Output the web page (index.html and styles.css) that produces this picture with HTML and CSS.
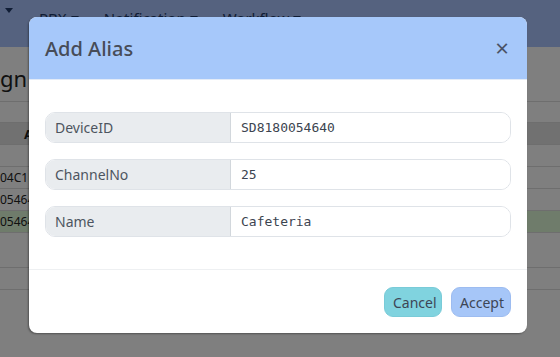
FILE: index.html
```html
<!DOCTYPE html>
<html>
<head>
<meta charset="utf-8">
<link rel="stylesheet" href="styles.css">
</head>
<body>
<div class="page">
  <nav class="navbar">
    <span class="nav-item"><span class="caret"></span></span>
    <span class="nav-item">PBX <span class="caret"></span></span>
    <span class="nav-item">Notification <span class="caret"></span></span>
    <span class="nav-item">Workflow <span class="caret"></span></span>
  </nav>
  <main class="content">
    <h4 class="page-title">gn</h4>
    <div class="table">
      <div class="row row-spacer"></div>
      <div class="row row-head"><span class="cell bold">A</span></div>
      <div class="row"></div>
      <div class="row"><span class="cell">04C1F8</span></div>
      <div class="row"><span class="cell">054640</span></div>
      <div class="row row-green"><span class="cell">054640</span></div>
      <div class="row row-tall"></div>
      <div class="row"></div>
      <div class="row row-tall2"></div>
    </div>
  </main>
  <div class="backdrop"></div>
  <div class="modal">
    <div class="modal-header">
      <h5 class="modal-title">Add Alias</h5>
      <span class="close">&times;</span>
    </div>
    <div class="modal-body">
      <div class="input-group">
        <span class="addon">DeviceID</span>
        <span class="field">SD8180054640</span>
      </div>
      <div class="input-group">
        <span class="addon">ChannelNo</span>
        <span class="field">25</span>
      </div>
      <div class="input-group">
        <span class="addon">Name</span>
        <span class="field">Cafeteria</span>
      </div>
    </div>
    <div class="modal-footer">
      <button class="btn btn-cancel">Cancel</button>
      <button class="btn btn-accept">Accept</button>
    </div>
  </div>
</div>
</body>
</html>
```
FILE: styles.css
```css
* { box-sizing: border-box; }
html, body { margin: 0; padding: 0; }
body {
  width: 560px;
  height: 357px;
  overflow: hidden;
  font-family: "Noto Sans", "Open Sans", sans-serif;
  background: #fff;
}
.page { position: relative; width: 560px; height: 357px; overflow: hidden; }
.navbar {
  height: 47px;
  background: #aac4fe;
  display: flex;
  align-items: flex-start;
  padding: 8px 0 0 5px;
  font-size: 15px;
  color: #213a6a;
}
.nav-item { display: flex; align-items: center; line-height: 20px; margin-right: 25px; }
.nav-item:first-child { margin-right: 26px; }
.caret {
  display: inline-block;
  width: 0; height: 0;
  border-left: 4px solid transparent;
  border-right: 4px solid transparent;
  border-top: 5px solid #213a6a;
  margin-left: 4px;
}
.nav-item:first-child .caret { margin-left: 0; }
.page-title {
  margin: 0;
  height: 54px;
  padding-top: 18px;
  font-size: 22px;
  font-weight: 400;
  line-height: 26px;
  color: #222;
}
.table { font-size: 12px; color: #222; }
.row {
  height: 22px;
  border-top: 1px solid #dcdcdc;
  display: flex;
  align-items: center;
}
.row-spacer { height: 21px; }
.row-head { background: #e2e2e2; padding-left: 24px; }
.row-green { background: #dff8d6; }
.row-tall { height: 35px; }
.row-tall2 { height: 34px; }
.cell { white-space: nowrap; }
.bold { font-weight: 700; font-size: 13px; }
.backdrop {
  position: absolute;
  inset: 0;
  background: rgba(0, 0, 0, 0.5);
}
.modal {
  position: absolute;
  left: 29px;
  top: 17px;
  width: 498px;
  background: #fff;
  border-radius: 8px;
  overflow: hidden;
  box-shadow: -1px 1px 2px rgba(0,0,0,0.35);
}
.modal-header {
  height: 63px;
  background: #a6c8fa;
  border-bottom: 1px solid #e3ebf7;
  display: flex;
  align-items: center;
  justify-content: space-between;
  padding: 2px 16px 0 16px;
}
.modal-title {
  margin: 0;
  font-size: 20px;
  font-weight: 500;
  color: #474c57;
  line-height: 30px;
}
.close {
  font-size: 24px;
  line-height: 24px;
  color: #4a5366;
  margin-right: 2px;
  margin-top: -2px;
}
.modal-body {
  padding: 32px 16px;
  display: flex;
  flex-direction: column;
  gap: 16px;
}
.input-group {
  display: flex;
  height: 31px;
  border: 1px solid #dfe3e8;
  border-radius: 10px;
  overflow: hidden;
}
.addon {
  width: 185px;
  background: #e9ecef;
  border-right: 1px solid #d2d7dc;
  color: #4d5560;
  font-size: 14px;
  display: flex;
  align-items: center;
  padding-left: 9px;
}
.field {
  flex: 1;
  background: #fff;
  display: flex;
  align-items: center;
  padding-left: 10px;
  font-family: "DejaVu Sans Mono", monospace;
  font-size: 13px;
  color: #3c4450;
}
.modal-footer {
  border-top: 1px solid #eef0f2;
  padding: 17px 16px 16px;
  display: flex;
  justify-content: flex-end;
  gap: 9px;
}
.btn {
  height: 30px;
  border-radius: 9px;
  font-family: "Noto Sans", "Open Sans", sans-serif;
  font-size: 14px;
  color: #3d4656;
  padding: 0 8px;
  cursor: pointer;
}
.btn-cancel { background: #80d3df; border: 1px solid #79cbd8; width: 58px; }
.btn-accept { background: #a6c6f8; border: 1px solid #9dbcf0; width: 60px; }
```
